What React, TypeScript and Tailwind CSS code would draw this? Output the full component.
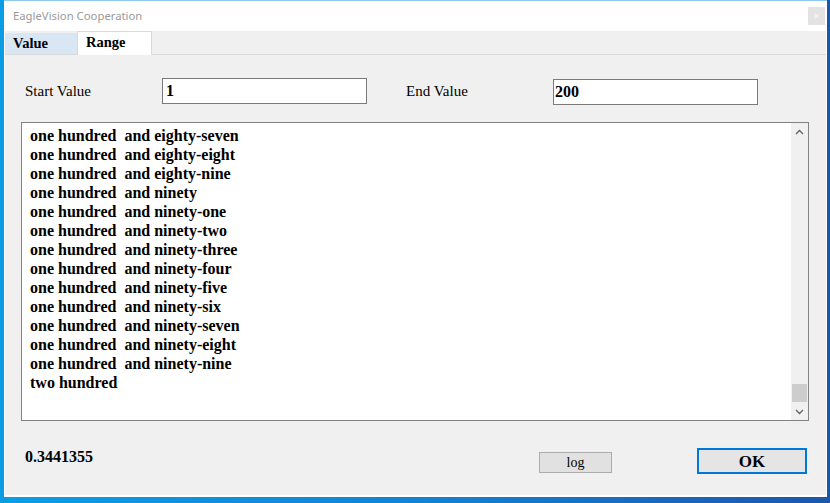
import { useState } from 'react';

const ones = ['', 'one', 'two', 'three', 'four', 'five', 'six', 'seven', 'eight', 'nine'];
const tensWords = ['', '', 'twenty', 'thirty', 'forty', 'fifty', 'sixty', 'seventy', 'eighty', 'ninety'];

// spelled the same way as the tool does it, double space included
function spell(n: number): string {
    if (n === 200) return 'two hundred';
    const rest = n - 100;
    const t = Math.floor(rest / 10);
    const o = rest % 10;
    const tail = o === 0 ? tensWords[t] : `${tensWords[t]}-${ones[o]}`;
    return `one hundred  and ${tail}`;
}

const lines = Array.from({ length: 14 }, (_, i) => spell(187 + i));

export default function App() {
    const [tab, setTab] = useState('Range');
    const serif = "font-['Liberation_Serif','Times_New_Roman',serif]";

    return (
        <div className="w-[830px] h-[503px] bg-gradient-to-r from-[#0a9de6] via-[#1283d4] to-[#1a57ab] pl-[4px] pr-[3px] pb-[6px]">
            <div className="h-[497px] bg-white border-t border-[#8fc8ee] flex flex-col">
                {/* title bar */}
                <div className="h-[30px] flex items-center justify-between pl-[9px] pr-[2px]">
                    <span className="font-['Noto_Sans',sans-serif] text-[11.3px] text-[#9a9a9a] mt-[1px]">EagleVision Cooperation</span>
                    <div className="w-[17px] h-[18px] bg-[#e3e3e3] flex items-center justify-center text-[11px] text-[#f7f7f7] font-['Noto_Sans',sans-serif]">×</div>
                </div>

                <div className="flex-1 flex flex-col bg-[#f0f0f0] ml-[1px] mr-[1px] mb-[2px]">
                    {/* tabs */}
                    <div className={`h-[24px] flex items-end border-b border-[#dadada] ${serif} font-bold text-[14.5px] text-black`}>
                        <button
                            onClick={() => setTab('Value')}
                            className={`h-[21px] w-[72px] text-left pl-[8px] ${tab === 'Value' ? 'bg-white' : 'bg-[#d9e7f5]'}`}
                        >
                            Value
                        </button>
                        <button
                            onClick={() => setTab('Range')}
                            className={`h-[24px] w-[75px] text-left pl-[8px] pb-[4px] border border-b-0 border-[#d9d9d9] -mb-[1px] ${tab === 'Range' ? 'bg-white' : 'bg-[#d9e7f5]'}`}
                        >
                            Range
                        </button>
                    </div>

                    {/* inputs */}
                    <div className={`flex items-center mt-[22px] ${serif} text-[15px] text-black`}>
                        <span className="ml-[20px] w-[137px]">Start Value</span>
                        <div className="w-[205px] h-[26px] bg-white border border-[#7a7a7a] flex items-center pl-[3px] font-bold text-[16px]">1</div>
                        <span className="ml-[39px] w-[147px]">End Value</span>
                        <div className="w-[205px] h-[26px] mt-[2px] bg-white border border-[#7a7a7a] flex items-center pl-[1px] font-bold text-[16px]">200</div>
                    </div>

                    {/* output list */}
                    <div className="ml-[16px] mt-[17px] w-[788px] h-[299px] bg-white border border-[#828282] flex">
                        <div className={`flex-1 pl-[8px] pt-[3px] ${serif} font-bold text-[16px] leading-[19px] text-black whitespace-pre`}>
                            {lines.map(l => (
                                <div key={l}>{l}</div>
                            ))}
                        </div>
                        <div className="w-[17px] bg-[#f0f0f0] flex flex-col items-center">
                            <svg width="17" height="17" viewBox="0 0 17 17" className="mt-[1px]">
                                <path d="M5 10 L8.5 6.5 L12 10" fill="none" stroke="#606060" strokeWidth="1.3" />
                            </svg>
                            <div className="flex-1" />
                            <div className="w-[15px] h-[18px] bg-[#cdcdcd]" />
                            <svg width="17" height="17" viewBox="0 0 17 17" className="mt-[1px]">
                                <path d="M5 7 L8.5 10.5 L12 7" fill="none" stroke="#606060" strokeWidth="1.3" />
                            </svg>
                        </div>
                    </div>

                    {/* bottom row */}
                    <div className={`flex items-start mt-[27px] ${serif} text-black`}>
                        <span className="ml-[20px] -mt-[1px] w-[514px] font-bold text-[16px] leading-[19px]">0.3441355</span>
                        <button className="mt-[4px] w-[73px] h-[21px] bg-[#e1e1e1] border border-[#adadad] text-[14px] leading-none pt-[1px]">log</button>
                        <button className="ml-[85px] w-[110px] h-[26px] bg-[#e5e5e5] border-2 border-[#0078d7] font-bold text-[17px] leading-none">OK</button>
                    </div>
                </div>
            </div>
        </div>
    );
}
